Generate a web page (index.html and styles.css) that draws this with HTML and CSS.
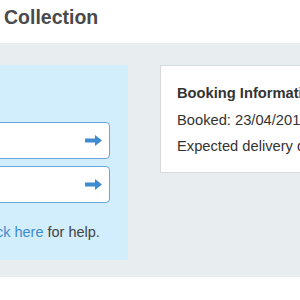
FILE: index.html
```html
<!DOCTYPE html>
<html lang="en">
<head>
    <meta charset="UTF-8">
    <title>Collection</title>
    <link rel="stylesheet" href="styles.css">
</head>
<body>
<div class="page-head">
    <h1>Collection</h1>
</div>

<div class="band">
    <div class="lookup">
        <div class="field">
            <input type="text" aria-label="Reference">
            <svg class="go" width="17" height="11" viewBox="0 0 17 11"><path d="M0 3.5h10V0l7 5.5-7 5.5V7.5H0z" fill="#3f8bd1"/></svg>
        </div>
        <div class="field">
            <input type="text" aria-label="Postcode">
            <svg class="go" width="17" height="11" viewBox="0 0 17 11"><path d="M0 3.5h10V0l7 5.5-7 5.5V7.5H0z" fill="#3f8bd1"/></svg>
        </div>
        <p class="help"><a href="#">Click here</a> for help.</p>
    </div>

    <div class="card">
        <h2>Booking Information</h2>
        <p>Booked: 23/04/2015</p>
        <p>Expected delivery date: 25/04/2015</p>
    </div>
</div>
</body>
</html>
```

FILE: styles.css
```css
body {
    font-family: "Liberation Sans", Arial, sans-serif;
    margin: 0;
    background-color: #ffffff;
    color: #333333;
    overflow: hidden;
}
.page-head { height: 43px; padding: 5px 0 0 4px; box-sizing: border-box; }
h1 { margin: 0; font-size: 19.5px; line-height: 24px; color: #4a4a4a; font-weight: bold; }

.band { display: flex; align-items: flex-start; gap: 32px; background-color: #e8edf0; padding: 22px 0 17px 0; }

.lookup { flex: none; margin-left: -41px; width: 131px; padding: 57px 18px 18px 20px; background-color: #d2edfb; }
.field { position: relative; margin-bottom: 7px; }
.field input { display: block; width: 100%; box-sizing: border-box; height: 37px; border: 1px solid #6aa6dc; border-radius: 4px; background-color: #ffffff; font: inherit; }
.field .go { position: absolute; right: 8px; top: 13px; }
.help { margin: 19px 0 0 0; font-size: 14.5px; line-height: 20px; color: #444444; white-space: nowrap; }
.help a { color: #3b8ccf; text-decoration: none; }

.card { flex: none; width: 260px; background-color: #ffffff; border: 1px solid #d6dadd; padding: 14px 16px 12px 16px; white-space: nowrap; font-size: 14.7px; line-height: 26.5px; }
.card h2 { margin: 0; font-size: 14.7px; font-weight: bold; color: #333333; }
.card p { margin: 0; color: #333333; }
```
